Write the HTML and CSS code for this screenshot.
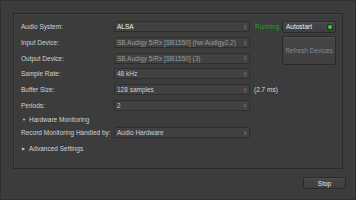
FILE: index.html
```html
<!DOCTYPE html>
<html>
<head>
<meta charset="utf-8">
<link rel="stylesheet" href="styles.css">
</head>
<body>
<div class="window">
  <div class="frame">
    <div class="form">
      <div class="label r1">Audio System:</div>
      <div class="combo r1 bright"><span>ALSA</span><i class="arr">⇕</i></div>
      <div class="running r1">Running</div>
      <div class="btn autostart r1"><span>Autostart</span><b class="led"></b></div>

      <div class="label r2">Input Device:</div>
      <div class="combo r2 dim"><span>SB Audigy 5/Rx [SB1550] (hw:Audigy2,2)</span><i class="arr">⇕</i></div>
      <div class="btn refresh">Refresh Devices</div>

      <div class="label r3">Output Device:</div>
      <div class="combo r3 dim"><span>SB Audigy 5/Rx [SB1550] (3)</span><i class="arr">⇕</i></div>

      <div class="label r4">Sample Rate:</div>
      <div class="combo r4"><span>48 kHz</span><i class="arr">⇕</i></div>

      <div class="label r5">Buffer Size:</div>
      <div class="combo r5"><span>128 samples</span><i class="arr">⇕</i></div>
      <div class="note r5">(2.7 ms)</div>

      <div class="label r6">Periods:</div>
      <div class="combo r6"><span>2</span><i class="arr">⇕</i></div>

      <div class="section r7"><span class="tri">▼</span>Hardware Monitoring</div>

      <div class="label r8">Record Monitoring Handled by:</div>
      <div class="combo r8"><span>Audio Hardware</span><i class="arr">⇕</i></div>

      <div class="section r9"><span class="tri">▶</span>Advanced Settings</div>
    </div>
  </div>
  <div class="footer">
    <div class="btn stop">Stop</div>
  </div>
</div>
</body>
</html>
```

FILE: styles.css
```css
* { box-sizing: border-box; }
html, body { margin: 0; padding: 0; }
body {
  width: 356px;
  height: 200px;
  background: #3c3c3c;
  font-family: "Liberation Sans", Arial, sans-serif;
  font-size: 6.5px;
  color: #d2d2d2;
  overflow: hidden;
}
.window {
  width: 356px;
  height: 200px;
  border: 1px solid #303030;
  padding: 12px 0 0 12px;
  display: flex;
  flex-direction: column;
}
.frame {
  width: 330px;
  height: 156px;
  border: 1px solid #2a2a2a;
  box-shadow: inset 1px 1px 0 #444;
  padding: 7px 0 0 6px;
}
.form {
  display: grid;
  grid-template-columns: 94px 136px 32px 54px;
  grid-template-rows: repeat(6, 11.7px) 8px 11px 12px;
  row-gap: 4px;
  align-items: center;
}
.r1 { grid-row: 1; }
.r2 { grid-row: 2; }
.r3 { grid-row: 3; }
.r4 { grid-row: 4; }
.r5 { grid-row: 5; }
.r6 { grid-row: 6; }
.r7 { grid-row: 7; }
.r8 { grid-row: 8; }
.r9 { grid-row: 9; }
.label { grid-column: 1; padding-left: 1px; white-space: nowrap; }
.combo {
  grid-column: 2;
  height: 11px;
  background: #414141;
  border: 1px solid #2e2e2e;
  border-radius: 2px;
  display: flex;
  align-items: center;
  justify-content: space-between;
  padding: 0 2px 0 2px;
  color: #cfcfcf;
  white-space: nowrap;
  overflow: hidden;
}
.combo.bright { color: #f0f0f0; }
.combo.dim { color: #9c9c9c; }
.arr {
  font-style: normal;
  font-size: 5px;
  color: #8a8a8a;
}
.running {
  grid-column: 3;
  color: #2f9a2f;
  padding-left: 5px;
}
.note {
  grid-column: 3 / 5;
  padding-left: 4px;
  color: #d8d8d8;
}
.btn {
  background: linear-gradient(#464646, #3e3e3e);
  border: 1px solid #2a2a2a;
  border-radius: 2px;
  box-shadow: inset 0 1px 0 #4e4e4e;
}
.autostart {
  grid-column: 4;
  height: 12px;
  display: flex;
  align-items: center;
  justify-content: space-between;
  padding: 0 3px 0 3px;
  color: #f0f0f0;
}
.led {
  width: 4px;
  height: 4px;
  border-radius: 50%;
  background: #3ed13e;
  box-shadow: 0 0 0 1px #1e2e1e;
}
.refresh {
  grid-column: 4;
  grid-row: 2 / 4;
  align-self: stretch;
  margin-top: -1px;
  margin-bottom: -1px;
  display: flex;
  align-items: center;
  justify-content: center;
  color: #8a8a8a;
}
.section {
  grid-column: 1 / 5;
  padding-left: 2px;
  display: flex;
  align-items: center;
}
.tri {
  font-size: 4px;
  width: 7px;
  color: #d2d2d2;
}
.footer {
  flex: 1;
  display: flex;
  justify-content: flex-end;
  align-items: flex-start;
  padding: 8px 9px 0 0;
}
.stop {
  width: 43px;
  height: 12px;
  display: flex;
  align-items: center;
  justify-content: center;
  color: #e6e6e6;
}
```
